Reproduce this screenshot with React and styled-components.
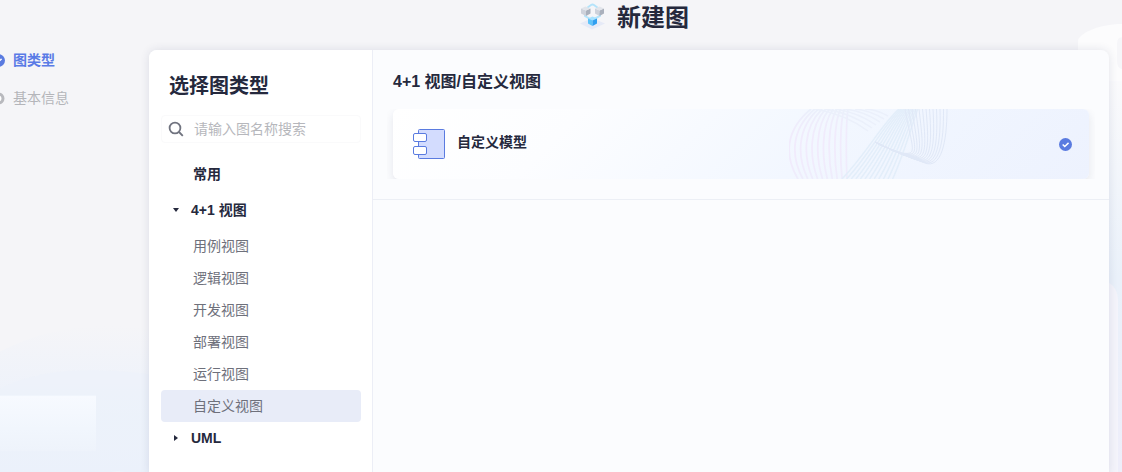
import React, { useState } from 'react';
import styled, { createGlobalStyle, css } from 'styled-components';

const GlobalStyle = createGlobalStyle`
  *, *::before, *::after { box-sizing: border-box; }
  body {
    margin: 0;
    background: #f5f5f8;
    color: #25293d;
    font-family: "Liberation Sans", "Noto Sans CJK SC", sans-serif;
    font-size: 14px;
    line-height: 20px;
  }
  button, input { font: inherit; color: inherit; }
  h1, h2, ul, ol { margin: 0; padding: 0; }
  ul, ol { list-style: none; }
`;

const Page = styled.div`
  position: relative;
  min-height: 100vh;
  display: grid;
  grid-template-columns: 149px minmax(0, 1fr) 13px;
  grid-template-rows: 50px minmax(0, 1fr);
  overflow: hidden;
`;

const Backdrop = styled.svg`
  position: absolute;
  inset: 0;
  width: 100%;
  height: 100%;
`;

const Header = styled.header`
  position: relative;
  grid-column: 2;
  height: 36px;
  display: flex;
  align-items: center;
  justify-content: center;
  gap: 8px;
  padding-left: 4px;
`;

const PageTitle = styled.h1`
  font-size: 24px;
  line-height: 36px;
  font-weight: 700;
`;

const Steps = styled.ol`
  position: relative;
  grid-column: 1;
  grid-row: 2;
  margin-left: -8px;
  display: flex;
  flex-direction: column;
  gap: 18px;
`;

const Step = styled.li`
  display: flex;
  align-items: center;
  gap: 8px;
  color: ${(p) => (p.$active ? '#5a7be6' : '#b4b5ba')};
  font-weight: ${(p) => (p.$active ? 600 : 400)};
`;

const Panel = styled.main`
  position: relative;
  grid-column: 2;
  grid-row: 2;
  display: flex;
  background: #fbfcfe;
  border-radius: 8px 8px 0 0;
  box-shadow: 0 0 10px rgba(40, 50, 90, 0.12);
`;

const Sidebar = styled.aside`
  flex: 0 0 224px;
  min-width: 0;
  padding: 20px 11px 16px 12px;
  background: #fff;
  border-right: 1px solid #eceef6;
  border-top-left-radius: 8px;
`;

const SidebarTitle = styled.h2`
  padding-left: 8px;
  font-size: 20px;
  line-height: 32px;
`;

const SearchBox = styled.label`
  display: flex;
  align-items: center;
  gap: 10px;
  height: 28px;
  margin: 13px 0 15px;
  padding: 0 6px;
  border: 1px solid #fafafb;
  border-radius: 4px;
`;

const SearchInput = styled.input`
  flex: 1;
  min-width: 0;
  padding: 0;
  border: 0;
  outline: 0;
  background: none;
  &::placeholder { color: #b6b7bc; opacity: 1; }
`;

const rowStyle = css`
  display: flex;
  align-items: center;
  width: 100%;
  height: 32px;
  border: 0;
  border-radius: 4px;
  background: none;
  text-align: left;
  cursor: pointer;
`;

const GroupButton = styled.button`
  ${rowStyle}
  gap: 10px;
  margin-bottom: 4px;
  padding: 0 10px;
  font-weight: 700;
`;

const LeafButton = styled.button`
  ${rowStyle}
  padding: 0 32px;
  margin-bottom: ${(p) => (p.$heading ? 4 : 0)}px;
  font-weight: ${(p) => (p.$heading ? 700 : 400)};
  color: ${(p) => (p.$heading ? '#25293d' : '#6e707b')};
  background: ${(p) => (p.$selected ? '#e8ecf8' : 'none')};
`;

const Content = styled.div`
  flex: 1;
  min-width: 0;
`;

const Section = styled.section`
  padding: 20px;
  border-bottom: 1px solid #eceff5;
`;

const SectionTitle = styled.h2`
  margin-bottom: 15px;
  font-size: 16px;
  line-height: 24px;
  font-weight: 700;
`;

const CardList = styled.div`
  margin: 0 -6px;
  padding: 0 6px;
  overflow: hidden;
`;

const Card = styled.button`
  position: relative;
  display: flex;
  align-items: center;
  gap: 12px;
  width: 100%;
  height: 70px;
  padding: 0 17px 0 20px;
  border: 0;
  border-radius: 6px;
  background: linear-gradient(135deg, #fff 0%, #fcfdff 25%, #f2f7ff 60%, #edf2fe 100%);
  box-shadow: 0 4px 10px rgba(30, 40, 80, 0.1);
  text-align: left;
  cursor: pointer;
`;

const CardName = styled.span`
  flex: 1;
  padding-bottom: 4px;
  font-weight: 600;
`;

const CardWaves = styled.svg`
  position: absolute;
  top: 0;
  right: 140px;
`;

function BackdropArt() {
  return (
    <Backdrop viewBox="0 0 1122 472" preserveAspectRatio="none" aria-hidden="true">
      <defs>
        <linearGradient id="leftGlow" x1="0" y1="0" x2="0" y2="1">
          <stop offset="0" stopColor="#ebf1fb" stopOpacity="0" />
          <stop offset="0.45" stopColor="#ebf1fb" stopOpacity="0.7" />
          <stop offset="1" stopColor="#ebf1fb" />
        </linearGradient>
        <linearGradient id="rightGlow" x1="0" y1="0" x2="0" y2="1">
          <stop offset="0" stopColor="#fafafc" />
          <stop offset="0.5" stopColor="#eaf1fa" />
          <stop offset="1" stopColor="#eeeefa" />
        </linearGradient>
        <linearGradient id="tile" x1="0" y1="0" x2="0" y2="1">
          <stop offset="0" stopColor="#f7faff" />
          <stop offset="0.6" stopColor="#f1f6fd" />
          <stop offset="1" stopColor="#eef3fb" />
        </linearGradient>
      </defs>
      <path d="M0 350C50 324 110 318 160 330V472H0Z" fill="url(#leftGlow)" />
      <path d="M0 387C45 365 95 365 160 374V472H0Z" fill="#ebf1fb" opacity="0.3" />
      <rect x="0" y="394" width="96" height="55" fill="url(#tile)" />
      <path d="M90 472C105 469 130 469 149 472Z" fill="#fafcff" />
      <path d="M1108 80H1122V472H1108Z" fill="url(#rightGlow)" />
      <path d="M1078 41C1078 34 1098 24 1122 24V81H1078Z" fill="#fcfcfd" />
      <path d="M1122 37C1117 37 1117 42 1117 46V60C1117 66 1119 68 1122 69Z" fill="#f6f6f9" />
      <path d="M1104 280C1114 282 1118 290 1118 300V472H1104Z" fill="#f4f4fb" />
    </Backdrop>
  );
}

function CubesIcon() {
  return (
    <svg width="36" height="36" viewBox="0 0 36 36" aria-hidden="true">
      <path d="M7 23.500L19 18L32 23.500L19 29.500Z" fill="#e6eaf7" />
      <path d="M14 8L18 5Q19.500 4 21 5L25 8M12 13V16L19 20L27 16V13" fill="none" stroke="#b4e3fa" strokeWidth="2" />
      <path d="M8 8.500L13 10.500V16L8 13.500Z" fill="#ced2db" />
      <path d="M13 10.500L17.500 8.500V13.500L13 16Z" fill="#aab0bc" />
      <path d="M8 8.500L12.500 6.500L17.500 8.500L13 10.500Z" fill="#e2e5eb" />
      <path d="M22 8.500L26.500 10.500V16L22 13.500Z" fill="#ced2db" />
      <path d="M26.500 10.500L31 8.500V13.500L26.500 16Z" fill="#aab0bc" />
      <path d="M22 8.500L26.500 6.500L31 8.500L26.500 10.500Z" fill="#e2e5eb" />
      <path d="M15 18.500L19.500 16.500L24 18.500L19.500 20.500Z" fill="#a6e2ff" />
      <path d="M15 18.500L19.500 20.500V26L15 23.500Z" fill="#5fc4fa" />
      <path d="M19.500 20.500L24 18.500V23.500L19.500 26Z" fill="#309ff0" />
    </svg>
  );
}

function CheckDot() {
  return (
    <svg width="13" height="13" viewBox="0 0 12 12" aria-hidden="true">
      <circle cx="6" cy="6" r="6" fill="#5a7be0" />
      <path d="M3.400 6L5.300 7.900L8.800 4.500" fill="none" stroke="#fff" strokeWidth="1.300" />
    </svg>
  );
}

function PendingDot() {
  return (
    <svg width="13" height="13" viewBox="0 0 13 13" aria-hidden="true">
      <circle cx="6.500" cy="6.500" r="4.500" fill="#fff" stroke="#b8b9be" strokeWidth="3" />
    </svg>
  );
}

function SearchIcon() {
  return (
    <svg width="16" height="16" viewBox="0 0 16 16" fill="none" stroke="#70737f" strokeWidth="1.800" aria-hidden="true">
      <circle cx="7" cy="7" r="5.400" />
      <path d="M11 11L14.800 14.800" />
    </svg>
  );
}

function Caret({ open }) {
  return (
    <svg width="10" height="10" viewBox="0 0 10 10" fill="#25293d" aria-hidden="true">
      <path d={open ? 'M2 3H8L5 7Z' : 'M3 2V8L7 5Z'} />
    </svg>
  );
}

function ModelIcon() {
  return (
    <svg width="32" height="30" viewBox="0 0 32 30" stroke="#5a7be0" aria-hidden="true">
      <rect x="5.500" y="0.500" width="26" height="29" rx="1" fill="#d3dcfe" />
      <rect x="0.500" y="4.500" width="13" height="8" rx="1.500" fill="#fff" />
      <rect x="0.500" y="17.500" width="13" height="8" rx="1.500" fill="#fff" />
    </svg>
  );
}

const range = (n) => Array.from({ length: n }, (_, i) => i);

function Waves() {
  return (
    <CardWaves width="160" height="70" viewBox="0 0 160 70" fill="none" aria-hidden="true">
      <defs>
        <linearGradient id="leftWave" x1="0" y1="0" x2="1" y2="0">
          <stop offset="0" stopColor="#f1ebfc" />
          <stop offset="1" stopColor="#eaf0fb" />
        </linearGradient>
      </defs>
      <g stroke="url(#leftWave)" strokeWidth="1.800">
        {range(11).map((i) => (
          <path key={i} d={`M${22 + i * 3.700} 0C${-5 + i * 6.200} ${22 - i} ${-4 + i * 6.100} 48 ${9 + i * 4.900} 70`} />
        ))}
      </g>
      <g stroke="#ebf0fb" strokeWidth="1.500">
        {range(6).map((i) => (
          <path key={i} d={`M${26 + i * 10} 0Q${56 + i * 6} ${5 - i} ${79 + i * 4} ${22 - i * 3}`} />
        ))}
      </g>
      <g stroke="#e3eefa" strokeWidth="1.500">
        {range(12).map((i) => (
          <path key={i} d={`M${53 + i * 4.600} 70C${78 + i * 3.400} 44 ${92 + i * 2.800} 16 ${110 + i * 1.700} 0`} />
        ))}
      </g>
      <g stroke="#e0e8f7" strokeWidth="1">
        {range(13).map((i) => (
          <path key={i} d={`M${158 - i * 3.500} 0C${158 - i * 3} 34 ${152 - i * 2} ${60 - i * 1.300} ${136 - i * 1.500} ${54 - i * 0.800}Q112 46 86 33`} />
        ))}
      </g>
    </CardWaves>
  );
}

const views = ['用例视图', '逻辑视图', '开发视图', '部署视图', '运行视图', '自定义视图'];

export default function App() {
  const [selected, setSelected] = useState('自定义视图');
  const [open, setOpen] = useState(true);
  return (
    <>
      <GlobalStyle />
      <Page>
        <BackdropArt />
        <Header>
          <CubesIcon />
          <PageTitle>新建图</PageTitle>
        </Header>
        <Steps>
          <Step $active aria-current="step"><CheckDot />图类型</Step>
          <Step><PendingDot />基本信息</Step>
        </Steps>
        <Panel>
          <Sidebar>
            <SidebarTitle>选择图类型</SidebarTitle>
            <SearchBox>
              <SearchIcon />
              <SearchInput type="text" aria-label="搜索" placeholder="请输入图名称搜索" />
            </SearchBox>
            <ul>
              <li><LeafButton type="button" $heading>常用</LeafButton></li>
              <li>
                <GroupButton type="button" aria-expanded={open} onClick={() => setOpen(!open)}>
                  <Caret open={open} />4+1 视图
                </GroupButton>
                {open && (
                  <ul>
                    {views.map((view) => (
                      <li key={view}>
                        <LeafButton type="button" $selected={view === selected} onClick={() => setSelected(view)}>
                          {view}
                        </LeafButton>
                      </li>
                    ))}
                  </ul>
                )}
              </li>
              <li><GroupButton type="button" aria-expanded="false"><Caret />UML</GroupButton></li>
            </ul>
          </Sidebar>
          <Content>
            <Section>
              <SectionTitle>4+1 视图/{selected}</SectionTitle>
              <CardList>
                <Card type="button" aria-pressed="true">
                  <Waves />
                  <ModelIcon />
                  <CardName>自定义模型</CardName>
                  <CheckDot />
                </Card>
              </CardList>
            </Section>
          </Content>
        </Panel>
      </Page>
    </>
  );
}
